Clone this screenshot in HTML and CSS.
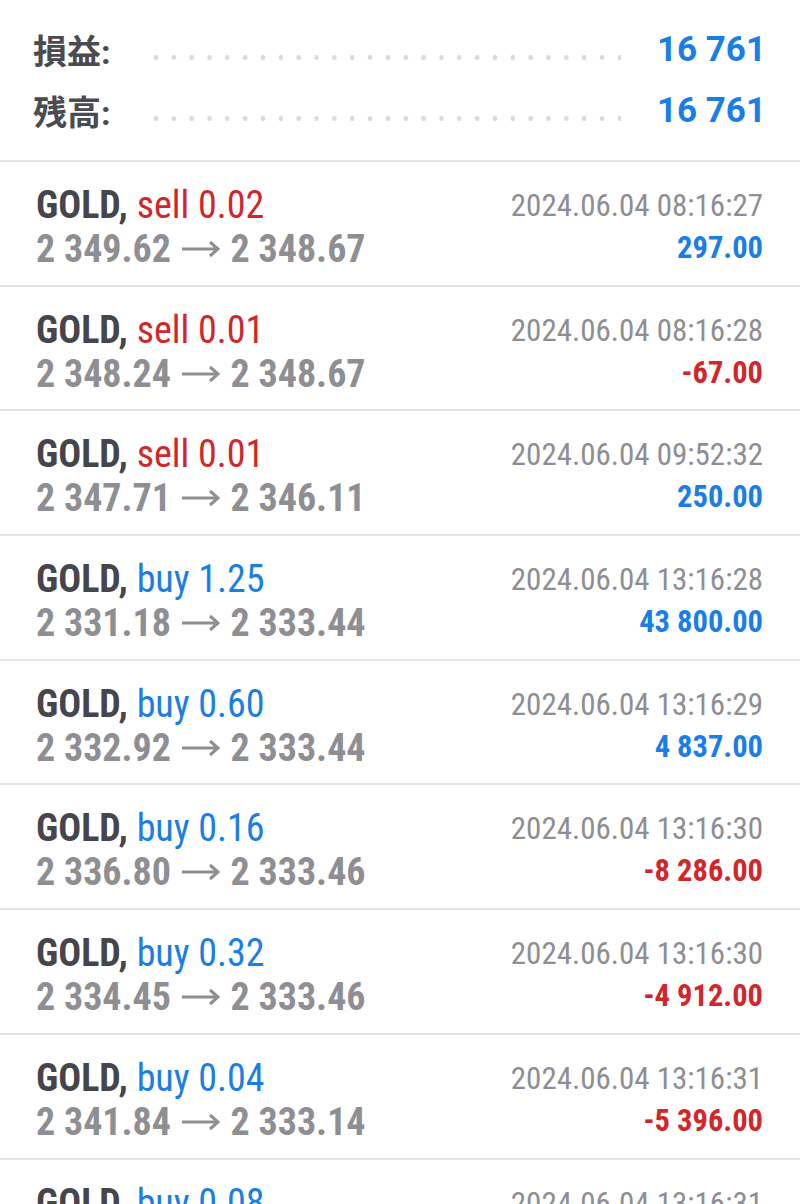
FILE: index.html
```html
<!DOCTYPE html>
<html lang="ja">
<head>
  <meta charset="UTF-8" />
  <title>取引履歴</title>
  <link rel="stylesheet" href="styles.css">
</head>
<body>
  <div class="summary">
    <div class="sum-row">
      <span class="sum-label">損益:</span>
      <span class="leader"></span>
      <span class="sum-value">16 761</span>
    </div>
    <div class="sum-row">
      <span class="sum-label">残高:</span>
      <span class="leader"></span>
      <span class="sum-value">16 761</span>
    </div>
  </div>

  <ul class="deals">
    <li class="deal">
      <div class="deal-left">
        <div class="deal-title"><span class="symbol">GOLD,</span> <span class="sell">sell 0.02</span></div>
        <div class="deal-prices">2 349.62 <svg class="arrow" viewBox="0 0 40 18"><path d="M1 9H37M29 2L37 9L29 16"/></svg> 2 348.67</div>
      </div>
      <div class="deal-right">
        <div class="deal-time">2024.06.04 08:16:27</div>
        <div class="deal-profit pos">297.00</div>
      </div>
    </li>
    <li class="deal">
      <div class="deal-left">
        <div class="deal-title"><span class="symbol">GOLD,</span> <span class="sell">sell 0.01</span></div>
        <div class="deal-prices">2 348.24 <svg class="arrow" viewBox="0 0 40 18"><path d="M1 9H37M29 2L37 9L29 16"/></svg> 2 348.67</div>
      </div>
      <div class="deal-right">
        <div class="deal-time">2024.06.04 08:16:28</div>
        <div class="deal-profit neg">-67.00</div>
      </div>
    </li>
    <li class="deal">
      <div class="deal-left">
        <div class="deal-title"><span class="symbol">GOLD,</span> <span class="sell">sell 0.01</span></div>
        <div class="deal-prices">2 347.71 <svg class="arrow" viewBox="0 0 40 18"><path d="M1 9H37M29 2L37 9L29 16"/></svg> 2 346.11</div>
      </div>
      <div class="deal-right">
        <div class="deal-time">2024.06.04 09:52:32</div>
        <div class="deal-profit pos">250.00</div>
      </div>
    </li>
    <li class="deal">
      <div class="deal-left">
        <div class="deal-title"><span class="symbol">GOLD,</span> <span class="buy">buy 1.25</span></div>
        <div class="deal-prices">2 331.18 <svg class="arrow" viewBox="0 0 40 18"><path d="M1 9H37M29 2L37 9L29 16"/></svg> 2 333.44</div>
      </div>
      <div class="deal-right">
        <div class="deal-time">2024.06.04 13:16:28</div>
        <div class="deal-profit pos">43 800.00</div>
      </div>
    </li>
    <li class="deal">
      <div class="deal-left">
        <div class="deal-title"><span class="symbol">GOLD,</span> <span class="buy">buy 0.60</span></div>
        <div class="deal-prices">2 332.92 <svg class="arrow" viewBox="0 0 40 18"><path d="M1 9H37M29 2L37 9L29 16"/></svg> 2 333.44</div>
      </div>
      <div class="deal-right">
        <div class="deal-time">2024.06.04 13:16:29</div>
        <div class="deal-profit pos">4 837.00</div>
      </div>
    </li>
    <li class="deal">
      <div class="deal-left">
        <div class="deal-title"><span class="symbol">GOLD,</span> <span class="buy">buy 0.16</span></div>
        <div class="deal-prices">2 336.80 <svg class="arrow" viewBox="0 0 40 18"><path d="M1 9H37M29 2L37 9L29 16"/></svg> 2 333.46</div>
      </div>
      <div class="deal-right">
        <div class="deal-time">2024.06.04 13:16:30</div>
        <div class="deal-profit neg">-8 286.00</div>
      </div>
    </li>
    <li class="deal">
      <div class="deal-left">
        <div class="deal-title"><span class="symbol">GOLD,</span> <span class="buy">buy 0.32</span></div>
        <div class="deal-prices">2 334.45 <svg class="arrow" viewBox="0 0 40 18"><path d="M1 9H37M29 2L37 9L29 16"/></svg> 2 333.46</div>
      </div>
      <div class="deal-right">
        <div class="deal-time">2024.06.04 13:16:30</div>
        <div class="deal-profit neg">-4 912.00</div>
      </div>
    </li>
    <li class="deal">
      <div class="deal-left">
        <div class="deal-title"><span class="symbol">GOLD,</span> <span class="buy">buy 0.04</span></div>
        <div class="deal-prices">2 341.84 <svg class="arrow" viewBox="0 0 40 18"><path d="M1 9H37M29 2L37 9L29 16"/></svg> 2 333.14</div>
      </div>
      <div class="deal-right">
        <div class="deal-time">2024.06.04 13:16:31</div>
        <div class="deal-profit neg">-5 396.00</div>
      </div>
    </li>
    <li class="deal">
      <div class="deal-left">
        <div class="deal-title"><span class="symbol">GOLD,</span> <span class="buy">buy 0.08</span></div>
        <div class="deal-prices">2 341.84 <svg class="arrow" viewBox="0 0 40 18"><path d="M1 9H37M29 2L37 9L29 16"/></svg> 2 333.14</div>
      </div>
      <div class="deal-right">
        <div class="deal-time">2024.06.04 13:16:31</div>
        <div class="deal-profit neg">-5 396.00</div>
      </div>
    </li>
  </ul>
</body>
</html>
```

FILE: styles.css
```css
body {
  margin: 0;
  background-color: #ffffff;
  font-family: "Roboto Condensed", Roboto, "Noto Sans CJK JP", sans-serif;
  font-stretch: condensed;
  color: #4a4a50;
}

.summary {
  padding: 19px 34px 19px 33px;
  border-bottom: 2px solid #e4e4e6;
}

.sum-row {
  display: flex;
  align-items: center;
  height: 61px;
}

.sum-label {
  font-family: Roboto, "Noto Sans CJK JP", sans-serif;
  font-stretch: normal;
  font-size: 34px;
  font-weight: 700;
  color: #4a4a50;
}

.leader {
  flex: 1;
  height: 5px;
  margin: 15px 36px 0 36px;
  background-image: radial-gradient(circle, #dadada 2.2px, transparent 2.7px);
  background-size: 17.85px 5px;
  background-repeat: repeat-x;
}

.sum-value {
  font-family: Roboto, sans-serif;
  font-stretch: normal;
  font-size: 35px;
  font-weight: 700;
  color: #1a7ee6;
}

.deals {
  list-style: none;
  margin: 0;
  padding: 0;
}

.deal {
  display: flex;
  justify-content: space-between;
  height: 122.7px;
  padding: 0 37px 0 36px;
  border-bottom: 2px solid #e4e4e6;
}

.deal-left {
  padding-top: 21px;
}

.deal-right {
  padding-top: 23px;
  text-align: right;
}

.deal-title, .deal-prices {
  font-size: 38px;
  line-height: 44px;
  white-space: nowrap;
}

.symbol {
  font-weight: 700;
  color: #45454b;
}

.sell {
  color: #d1262a;
}

.buy {
  color: #1a7ee6;
}

.deal-prices {
  font-weight: 700;
  color: #8e8e93;
}

.arrow {
  width: 40px;
  height: 18px;
  margin: 0 1px;
  vertical-align: 4px;
  fill: none;
  stroke: #8e8e93;
  stroke-width: 3;
}

.deal-time {
  font-size: 31px;
  line-height: 42px;
  color: #8e8e93;
}

.deal-profit {
  font-size: 30.5px;
  line-height: 42px;
  font-weight: 700;
}

.pos {
  color: #1a7ee6;
}

.neg {
  color: #d1262a;
}
```
